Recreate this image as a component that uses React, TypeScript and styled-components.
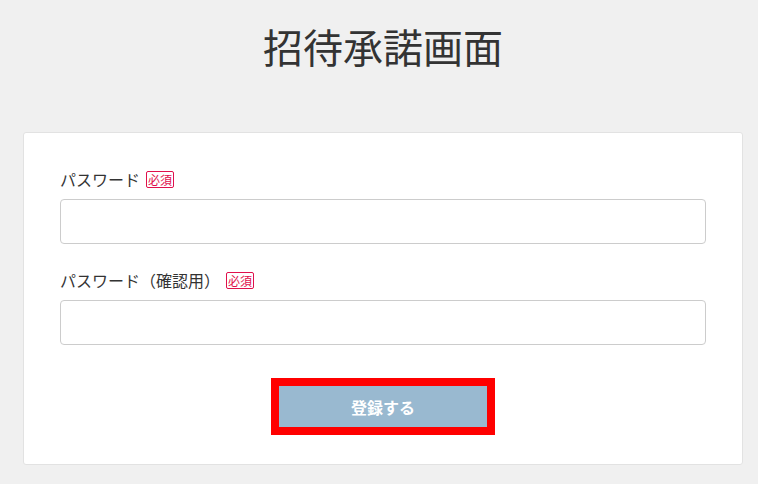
import React from 'react';
import styled, { createGlobalStyle } from 'styled-components';

const GlobalStyle = createGlobalStyle`
  html, body {
    margin: 0;
    padding: 0;
    background: #f0f0f0;
  }
  body {
    font-family: "Noto Sans CJK JP", "Noto Sans", sans-serif;
    color: #333;
  }
`;

const Page = styled.div`
  width: 750px;
  min-height: 484px;
  padding-left: 8px;
  display: flex;
  flex-direction: column;
  align-items: center;
`;

const Title = styled.h1`
  margin: 18px 0 0;
  height: 56px;
  font-size: 40px;
  font-weight: 400;
  line-height: 56px;
  color: #333;
`;

const Card = styled.div`
  margin-top: 58px;
  width: 720px;
  box-sizing: border-box;
  background: #fff;
  border: 1px solid #e2e2e2;
  border-radius: 3px;
  padding: 35px 36px 29px;
  display: flex;
  flex-direction: column;
`;

const Field = styled.div<{ $gap?: number }>`
  display: flex;
  flex-direction: column;
  margin-bottom: ${p => p.$gap ?? 0}px;
`;

const Label = styled.label`
  display: flex;
  align-items: center;
  height: 22px;
  font-size: 16px;
  color: #333;
  margin-bottom: 9px;
`;

const Required = styled.span`
  margin-left: 6px;
  border: 1px solid #e0104c;
  border-radius: 2px;
  color: #e0104c;
  font-size: 12px;
  line-height: 15px;
  padding: 0 1px;
`;

const Input = styled.input`
  box-sizing: border-box;
  width: 646px;
  height: 45px;
  border: 1px solid #ccc;
  border-radius: 4px;
  background: #fff;
  outline: none;
`;

const Actions = styled.div`
  display: flex;
  justify-content: center;
  margin-top: 33px;
`;

const Highlight = styled.div`
  border: 8px solid #ff0000;
  display: flex;
`;

const Submit = styled.button`
  width: 208px;
  height: 41px;
  border: none;
  background: #99b9d0;
  color: #fff;
  font-family: "Noto Sans CJK JP", sans-serif;
  font-size: 16px;
  font-weight: 700;
  cursor: pointer;
`;

export default function App() {
  return (
    <Page>
      <GlobalStyle />
      <Title>招待承諾画面</Title>
      <Card>
        <Field $gap={25}>
          <Label>
            パスワード<Required>必須</Required>
          </Label>
          <Input type="password" />
        </Field>
        <Field>
          <Label>
            パスワード（確認用）<Required>必須</Required>
          </Label>
          <Input type="password" />
        </Field>
        <Actions>
          <Highlight>
            <Submit type="button">登録する</Submit>
          </Highlight>
        </Actions>
      </Card>
    </Page>
  );
}
